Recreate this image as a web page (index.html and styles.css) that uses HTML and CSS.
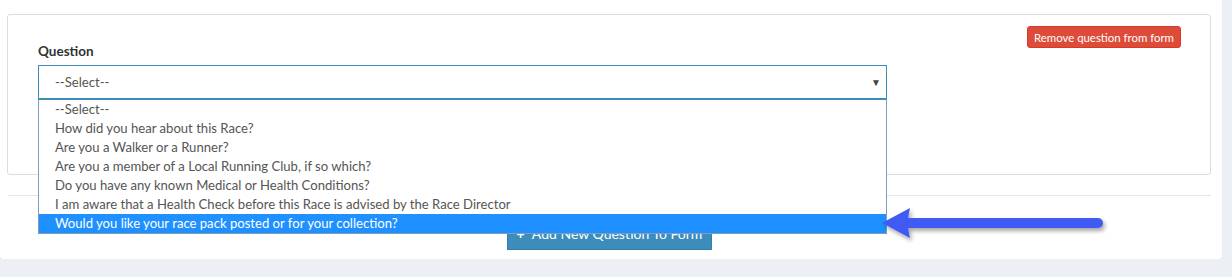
FILE: index.html
```html
<!DOCTYPE html>
<html lang="en">
<head>
    <meta charset="UTF-8">
    <meta name="viewport" content="width=device-width, initial-scale=1.0">
    <title>Race Form Questions</title>
    <link rel="stylesheet" href="styles.css">
</head>
<body>

    <div class="box">
        <div class="box-body">
            <div class="question-panel">
                <div class="question-field">
                    <label class="field-label">Question</label>
                    <div class="select-wrap">
                        <div class="select-box">
                            <span>--Select--</span>
                            <span class="caret">&#9660;</span>
                        </div>
                        <ul class="select-list">
                            <li>--Select--</li>
                            <li>How did you hear about this Race?</li>
                            <li>Are you a Walker or a Runner?</li>
                            <li>Are you a member of a Local Running Club, if so which?</li>
                            <li>Do you have any known Medical or Health Conditions?</li>
                            <li>I am aware that a Health Check before this Race is advised by the Race Director</li>
                            <li class="active">Would you like your race pack posted or for your collection?</li>
                        </ul>
                    </div>
                </div>
                <div class="question-actions">
                    <button class="btn-remove">Remove question from form</button>
                </div>
            </div>
        </div>

        <div class="box-footer">
            <button class="btn-add"><span class="plus">+</span> Add New Question To Form</button>
        </div>

        <svg class="pointer-arrow" width="240" height="50" viewBox="0 0 240 50">
            <defs>
                <filter id="shadow" x="-10%" y="-30%" width="120%" height="180%">
                    <feDropShadow dx="2" dy="3" stdDeviation="2" flood-color="#000" flood-opacity="0.35"/>
                </filter>
            </defs>
            <g filter="url(#shadow)" fill="#3f5af3">
                <line x1="28" y1="19" x2="218" y2="19" stroke="#3f5af3" stroke-width="10" stroke-linecap="round"/>
                <path d="M2 19 L30 4 Q26 19 30 34 Z"/>
            </g>
        </svg>
    </div>

</body>
</html>
```

FILE: styles.css
```css
* {
    margin: 0;
    padding: 0;
    box-sizing: border-box;
}
body {
    font-family: 'Lato', 'Open Sans', sans-serif;
    font-size: 14px;
    background-color: #ecf0f5;
    color: #333;
}
.box {
    position: relative;
    width: 1222px;
    background-color: #fff;
    border-radius: 0 0 3px 3px;
    box-shadow: 0 1px 1px rgba(0, 0, 0, 0.1);
}
.box-body {
    padding: 14px 11px 20px 7px;
}
.question-panel {
    display: flex;
    justify-content: space-between;
    height: 161px;
    padding: 11px 29px 0 30px;
    border: 1px solid #ddd;
    border-radius: 3px;
}
.question-field {
    width: 849px;
    padding-top: 16px;
}
.field-label {
    display: block;
    font-weight: bold;
    font-size: 13.5px;
    line-height: 19px;
    color: #333;
    margin-bottom: 4px;
}
.select-wrap {
    position: relative;
}
.select-box {
    display: flex;
    justify-content: space-between;
    align-items: center;
    height: 34px;
    padding: 0 5px 0 16px;
    border: 1px solid #3c8dbc;
    color: #555;
    font-size: 13.1px;
}
.caret {
    font-size: 10px;
    color: #444;
}
.select-list {
    position: absolute;
    top: 34px;
    left: 0;
    width: 849px;
    list-style: none;
    background-color: #fff;
    border: 1px solid #7f9db9;
    border-top-color: #3c8dbc;
    z-index: 5;
}
.select-list li {
    height: 19px;
    line-height: 19px;
    padding-left: 16px;
    font-size: 13.1px;
    color: #555;
    white-space: nowrap;
}
.select-list li.active {
    background-color: #1e90ff;
    color: #fff;
}
.btn-remove {
    height: 22px;
    padding: 0 6px;
    font-family: inherit;
    font-size: 11.4px;
    color: #fff;
    background-color: #dd4b39;
    border: 1px solid #d73925;
    border-radius: 3px;
}
.box-footer {
    display: flex;
    justify-content: center;
    margin: 0 11px 0 8px;
    padding: 20px 0 9px;
    border-top: 1px solid #e6e6e6;
}
.btn-add {
    width: 205px;
    height: 34px;
    font-family: inherit;
    font-size: 14px;
    color: #fff;
    background-color: #3c8dbc;
    border: 1px solid #367fa9;
}
.btn-add .plus {
    font-weight: bold;
    margin-right: 4px;
}
.pointer-arrow {
    position: absolute;
    left: 880px;
    top: 204px;
    z-index: 6;
}
```
